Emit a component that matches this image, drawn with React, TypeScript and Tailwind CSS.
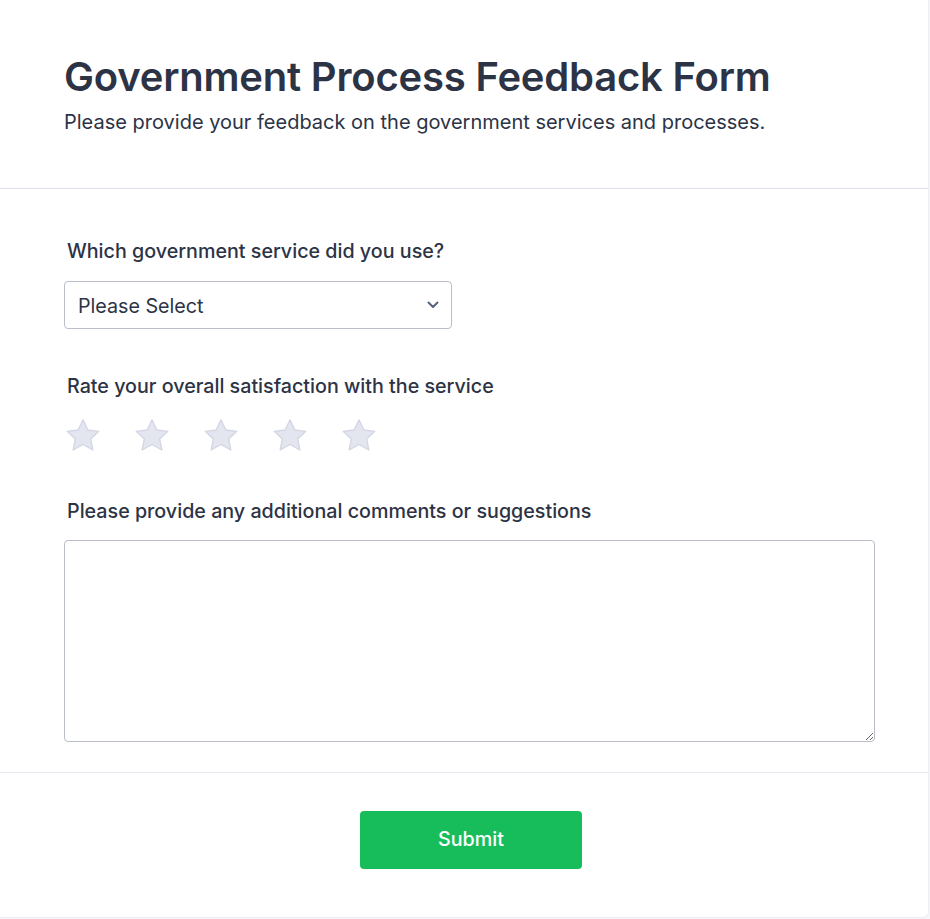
import React, { useState } from 'react';

const Star: React.FC<{ active: boolean; onClick: () => void }> = ({ active, onClick }) => (
  <button type="button" onClick={onClick} className="w-[40px] h-[40px] flex items-center justify-center">
    <svg width="41" height="41" viewBox="0 0 24 24">
      <path
        d="M12 2.6l2.9 6.1 6.6.8-4.9 4.6 1.3 6.6L12 17.4l-5.9 3.3 1.3-6.6L2.5 9.5l6.6-.8z"
        fill={active ? '#f7b500' : '#e3e5ef'}
        stroke={active ? '#e0a200' : '#d3d6e4'}
        strokeWidth="0.8"
        strokeLinejoin="round"
      />
    </svg>
  </button>
);

export default function App() {
  const [rating, setRating] = useState(0);

  return (
    <div className="min-h-screen bg-[#f5f6fa]" style={{ fontFamily: 'Inter, "Noto Sans", sans-serif' }}>
      <div className="w-[929px] h-[918px] bg-white rounded-br-[6px] border-r border-b border-[#eceef4] text-[#2c3345] flex flex-col">
        <div className="px-[64px] pt-[53px] pb-[53px] border-b border-[#dcdfea]">
          <h1 className="text-[40px] leading-[48px] font-semibold tracking-[-0.2px]">Government Process Feedback Form</h1>
          <p className="text-[20px] leading-[26px] mt-[8px]">Please provide your feedback on the government services and processes.</p>
        </div>

        <div className="px-[64px] pt-[50px] flex flex-col">
          <label className="text-[19.7px] leading-[25px] font-medium pl-[3px]">Which government service did you use?</label>
          <div className="relative mt-[17px] w-[388px]">
            <select className="w-full h-[48px] appearance-none rounded-[4px] border border-[#b8bdc9] bg-white pl-[13px] pt-[3px] text-[19.7px] text-[#2c3345] outline-none">
              <option>Please Select</option>
              <option>Passport Services</option>
              <option>Tax Filing</option>
              <option>Driver's License</option>
            </select>
            <svg className="absolute right-[13px] top-[20px] pointer-events-none" width="12" height="8" viewBox="0 0 12 8">
              <path d="M1.5 1.5L6 6l4.5-4.5" fill="none" stroke="#57647e" strokeWidth="2" strokeLinecap="round" strokeLinejoin="round" />
            </svg>
          </div>

          <label className="text-[19.7px] leading-[25px] font-medium pl-[3px] mt-[45px]">Rate your overall satisfaction with the service</label>
          <div className="flex gap-[29px] mt-[16px] -ml-[1px]">
            {[1, 2, 3, 4, 5].map((n) => (
              <Star key={n} active={n <= rating} onClick={() => setRating(n)} />
            ))}
          </div>

          <label className="text-[19.7px] leading-[25px] font-medium pl-[3px] mt-[44px]">Please provide any additional comments or suggestions</label>
          <textarea className="mt-[16px] w-[811px] h-[202px] rounded-[4px] border border-[#b8bdc9] outline-none p-[12px] text-[16px]" />
        </div>

        <div className="mt-[30px] border-t border-[#e6e8ef] flex justify-center pl-[14px] pt-[38px]">
          <button type="button" className="w-[222px] h-[58px] rounded-[4px] bg-[#18bd5b] text-white text-[19.7px] font-medium">
            Submit
          </button>
        </div>
      </div>
    </div>
  );
}
